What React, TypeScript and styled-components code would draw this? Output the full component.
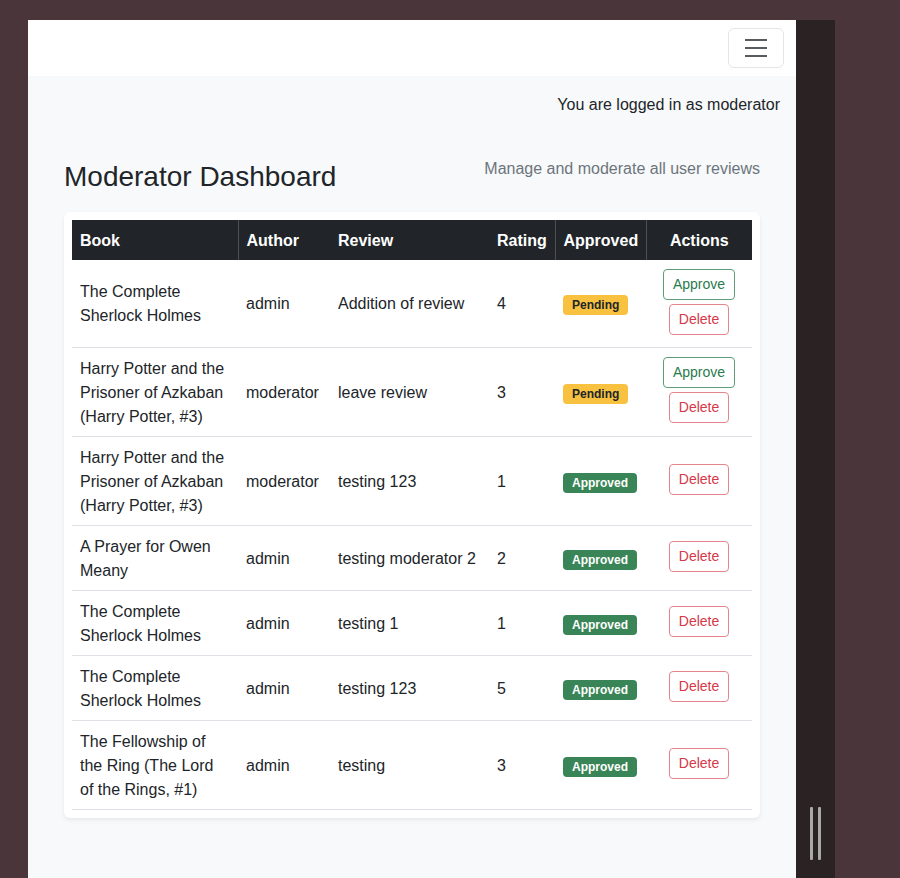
import styled, { createGlobalStyle } from "styled-components";

const GlobalStyle = createGlobalStyle`
  * {
    box-sizing: border-box;
  }
  body {
    margin: 0;
    background-color: #4a353b;
    font-family: "Liberation Sans", Arial, sans-serif;
    color: #212529;
  }
`;

const Page = styled.div`
  display: flex;
  height: 100vh;
  padding: 20px 0 0 28px;
  overflow: hidden;
`;

const Window = styled.div`
  width: 768px;
  display: flex;
  flex-direction: column;
  background-color: #f8f9fa;
`;

const NavBar = styled.nav`
  display: flex;
  justify-content: flex-end;
  padding: 8px 12px;
  background-color: #fff;
`;

const Toggler = styled.button`
  width: 56px;
  height: 40px;
  padding: 4px 12px;
  border: 1px solid rgba(0, 0, 0, 0.1);
  border-radius: 6px;
  background: transparent;
  display: flex;
  align-items: center;
  justify-content: center;
`;

const Main = styled.main`
  padding: 17px 16px 0;
`;

const LoginNote = styled.p`
  margin: 0;
  text-align: right;
  font-size: 16px;
  line-height: 24px;
`;

const Container = styled.div`
  padding: 0 20px;
`;

const Header = styled.header`
  display: flex;
  justify-content: space-between;
  align-items: flex-start;
  margin-top: 40px;
`;

const Title = styled.h2`
  margin: 3px 0 0;
  font-size: 28px;
  font-weight: 500;
  line-height: 1.2;
`;

const Subtitle = styled.p`
  margin: 0;
  font-size: 16px;
  line-height: 24px;
  color: #6c757d;
`;

const Card = styled.div`
  margin-top: 18px;
  padding: 8px;
  background-color: #fff;
  border-radius: 6px;
  box-shadow: 0 2px 4px rgba(0, 0, 0, 0.075);
`;

const Table = styled.table`
  width: 100%;
  table-layout: fixed;
  border-collapse: collapse;
  font-size: 16px;
  line-height: 24px;
`;

const HeadCell = styled.th<{ $divided?: boolean; $center?: boolean }>`
  padding: 9px 8px 7px;
  background-color: #212529;
  color: #fff;
  font-weight: 700;
  white-space: nowrap;
  text-align: ${(p) => (p.$center ? "center" : "left")};
  border-left: ${(p) => (p.$divided ? "1px solid #4d5154" : "none")};
`;

const Row = styled.tr`
  border-bottom: 1px solid #dee2e6;
`;

const Cell = styled.td<{ $center?: boolean }>`
  padding: 9px 8px 7px;
  vertical-align: middle;
  text-align: ${(p) => (p.$center ? "center" : "left")};
`;

const Badge = styled.span<{ $tone: "warning" | "success" }>`
  display: inline-block;
  padding: 4px 9px;
  font-size: 12px;
  font-weight: 700;
  line-height: 1;
  border-radius: 4px;
  white-space: nowrap;
  background-color: ${(p) => (p.$tone === "warning" ? "#f8c240" : "#3a8557")};
  color: ${(p) => (p.$tone === "warning" ? "#212529" : "#fff")};
`;

const Actions = styled.div`
  display: flex;
  flex-direction: column;
  align-items: center;
  gap: 4px;
  padding: 0 0 5px;
`;

const ActionButton = styled.button<{ $variant: "success" | "danger" }>`
  padding: 4px 9px;
  font-family: inherit;
  font-size: 14px;
  line-height: 21px;
  background: transparent;
  border-radius: 4px;
  border: 1px solid ${(p) => (p.$variant === "success" ? "#5f9c77" : "#e3858f")};
  color: ${(p) => (p.$variant === "success" ? "#2a7a4b" : "#d53848")};
`;

const ScrollStrip = styled.div`
  width: 39px;
  background-color: #2b2224;
  display: flex;
  align-items: flex-end;
  justify-content: center;
  gap: 5px;
  padding-bottom: 18px;
`;

const GripBar = styled.span`
  width: 3px;
  height: 53px;
  border-radius: 1px;
  background-color: #a9a9a9;
`;

type Review = {
  book: string;
  author: string;
  review: string;
  rating: number;
  approved: boolean;
};

const reviews: Review[] = [
  { book: "The Complete Sherlock Holmes", author: "admin", review: "Addition of review", rating: 4, approved: false },
  { book: "Harry Potter and the Prisoner of Azkaban (Harry Potter, #3)", author: "moderator", review: "leave review", rating: 3, approved: false },
  { book: "Harry Potter and the Prisoner of Azkaban (Harry Potter, #3)", author: "moderator", review: "testing 123", rating: 1, approved: true },
  { book: "A Prayer for Owen Meany", author: "admin", review: "testing moderator 2", rating: 2, approved: true },
  { book: "The Complete Sherlock Holmes", author: "admin", review: "testing 1", rating: 1, approved: true },
  { book: "The Complete Sherlock Holmes", author: "admin", review: "testing 123", rating: 5, approved: true },
  { book: "The Fellowship of the Ring (The Lord of the Rings, #1)", author: "admin", review: "testing", rating: 3, approved: true },
];

function MenuIcon() {
  return (
    <svg width="30" height="30" viewBox="0 0 30 30">
      <path
        d="M4 7h22M4 15h22M4 23h22"
        stroke="rgba(33, 37, 41, 0.75)"
        strokeWidth="2"
        strokeMiterlimit="10"
      />
    </svg>
  );
}

export default function App() {
  return (
    <>
      <GlobalStyle />
      <Page>
        <Window>
          <NavBar>
            <Toggler aria-label="Toggle navigation">
              <MenuIcon />
            </Toggler>
          </NavBar>
          <Main>
            <LoginNote>You are logged in as moderator</LoginNote>
            <Container>
              <Header>
                <Title>Moderator Dashboard</Title>
                <Subtitle>Manage and moderate all user reviews</Subtitle>
              </Header>
              <Card>
                <Table>
                  <colgroup>
                    <col style={{ width: 166 }} />
                    <col style={{ width: 92 }} />
                    <col style={{ width: 159 }} />
                    <col style={{ width: 66 }} />
                    <col style={{ width: 91 }} />
                    <col style={{ width: 106 }} />
                  </colgroup>
                  <thead>
                    <tr>
                      <HeadCell>Book</HeadCell>
                      <HeadCell $divided>Author</HeadCell>
                      <HeadCell>Review</HeadCell>
                      <HeadCell>Rating</HeadCell>
                      <HeadCell $divided>Approved</HeadCell>
                      <HeadCell $divided $center>Actions</HeadCell>
                    </tr>
                  </thead>
                  <tbody>
                    {reviews.map((r, i) => (
                      <Row key={i}>
                        <Cell>{r.book}</Cell>
                        <Cell>{r.author}</Cell>
                        <Cell>{r.review}</Cell>
                        <Cell>{r.rating}</Cell>
                        <Cell>
                          {r.approved ? (
                            <Badge $tone="success">Approved</Badge>
                          ) : (
                            <Badge $tone="warning">Pending</Badge>
                          )}
                        </Cell>
                        <Cell $center>
                          <Actions>
                            {!r.approved && <ActionButton $variant="success">Approve</ActionButton>}
                            <ActionButton $variant="danger">Delete</ActionButton>
                          </Actions>
                        </Cell>
                      </Row>
                    ))}
                  </tbody>
                </Table>
              </Card>
            </Container>
          </Main>
        </Window>
        <ScrollStrip>
          <GripBar />
          <GripBar />
        </ScrollStrip>
      </Page>
    </>
  );
}
